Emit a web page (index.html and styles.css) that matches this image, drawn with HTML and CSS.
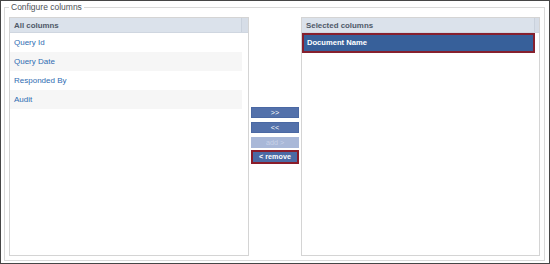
FILE: index.html
```html
<!DOCTYPE html>
<html>
<head>
<meta charset="utf-8">
<link rel="stylesheet" href="styles.css">
</head>
<body>
<div class="frame">
  <fieldset class="config">
    <legend class="config-title">Configure columns</legend>
    <div class="lists">
      <div class="panel panel-left">
        <div class="panel-head"><span class="panel-title">All columns</span><span class="gutter"></span></div>
        <ul class="rows">
          <li class="row">Query Id</li>
          <li class="row alt">Query Date</li>
          <li class="row">Responded By</li>
          <li class="row alt">Audit</li>
        </ul>
      </div>
      <div class="actions">
        <button class="btn">&gt;&gt;</button>
        <button class="btn">&lt;&lt;</button>
        <button class="btn disabled">add &gt;</button>
        <button class="btn focused">&lt; remove</button>
      </div>
      <div class="panel panel-right">
        <div class="panel-head"><span class="panel-title">Selected columns</span><span class="gutter"></span></div>
        <ul class="rows">
          <li class="row selected">Document Name</li>
        </ul>
      </div>
    </div>
  </fieldset>
</div>
</body>
</html>
```
FILE: styles.css
```css
html, body {
  margin: 0;
  padding: 0;
  background: #ffffff;
}
body {
  font-family: "Liberation Sans", Arial, sans-serif;
}
.frame {
  width: 550px;
  height: 264px;
  box-sizing: border-box;
  border: 1px solid #464646;
  padding: 1px 4px 2px 3px;
  background: #fff;
}
.config {
  margin: 0;
  border: 1px solid #d9d9d9;
  padding: 5px 4px 4px 4px;
  min-width: 0;
}
.config-title {
  font-size: 8.5px;
  line-height: 10px;
  color: #4d5258;
  padding: 0 2px;
  margin-left: 0;
}
.lists {
  display: flex;
  height: 239px;
}
.panel {
  box-sizing: border-box;
  border: 1px solid #d4d4d4;
  background: #fff;
  display: flex;
  flex-direction: column;
}
.panel-left { width: 240px; }
.panel-right { width: 239px; }
.panel-head {
  display: flex;
  height: 15px;
  box-sizing: border-box;
  background: #dbe2eb;
  border-bottom: 1px solid #cfd6e0;
}
.panel-title {
  flex: 1;
  font-size: 7.9px;
  font-weight: bold;
  color: #4f5968;
  line-height: 15px;
  padding-left: 4px;
}
.gutter {
  width: 6px;
  border-left: 1px solid #c9d1dc;
  background: #d6dde7;
}
.panel-right .gutter { width: 4px; }
.rows {
  list-style: none;
  margin: 0;
  padding: 0 6px 0 0;
}
.panel-right .rows { padding-right: 4px; }
.row {
  height: 19px;
  line-height: 19px;
  font-size: 8px;
  color: #2f6cb2;
  padding-left: 4px;
}
.row.alt {
  background: #f6f6f6;
}
.row.selected {
  box-sizing: border-box;
  height: 20px;
  line-height: 16px;
  background: #37609a;
  border: 2px solid #86202e;
  color: #ffffff;
  font-weight: bold;
  font-size: 7.6px;
  padding-left: 3px;
}
.actions {
  width: 52px;
  display: flex;
  flex-direction: column;
  align-items: center;
  justify-content: center;
  gap: 4px;
  padding-bottom: 3px;
}
.btn {
  width: 48px;
  height: 11px;
  box-sizing: border-box;
  margin: 0;
  padding: 0;
  border: 1px solid #4a68a3;
  background: #5371ab;
  color: #ffffff;
  font-family: "Liberation Sans", Arial, sans-serif;
  font-size: 7.2px;
  line-height: 9px;
}
.btn.disabled {
  background: #a9b8d8;
  border-color: #a9b8d8;
  color: #c8d2e8;
}
.btn.focused {
  height: 14px;
  margin-top: -2px;
  border: 2px solid #8a1c2a;
  font-weight: bold;
  line-height: 10px;
  background: #4b6aa4;
}
```
